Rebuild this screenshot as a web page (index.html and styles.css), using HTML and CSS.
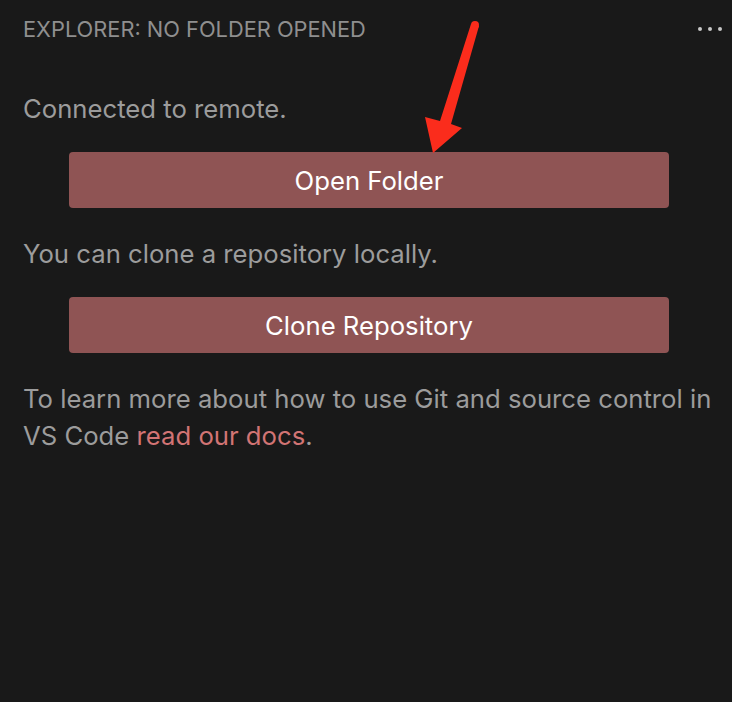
FILE: index.html
```html
<!DOCTYPE html>
<html>
<head>
<meta charset="utf-8">
<link rel="stylesheet" href="styles.css">
</head>
<body>
<div class="pane">
  <div class="header">
    <span class="title">EXPLORER: NO FOLDER OPENED</span>
    <span class="more"><i></i><i></i><i></i></span>
  </div>
  <div class="content">
    <p class="line first">Connected to remote.</p>
    <div class="btnrow"><button class="btn">Open Folder</button></div>
    <p class="line">You can clone a repository locally.</p>
    <div class="btnrow"><button class="btn">Clone Repository</button></div>
    <p class="line para">To learn more about how to use Git and source control in VS Code <a class="link">read our docs</a>.</p>
  </div>
  <svg class="arrow" width="732" height="702" viewBox="0 0 732 702">
    <circle cx="475" cy="25" r="4" fill="#fb2c1c"/>
    <polygon points="471,24 479,26 451,124 462,128 433,153 425,117 440,121" fill="#fb2c1c"/>
  </svg>
</div>
</body>
</html>
```
FILE: styles.css
```css
html, body {
  margin: 0;
  padding: 0;
  background: #191919;
}
.pane {
  position: relative;
  width: 732px;
  height: 702px;
  background: #191919;
  font-family: Inter, "Noto Sans", sans-serif;
  overflow: hidden;
}
.header {
  height: 58px;
  display: flex;
  align-items: center;
  justify-content: space-between;
  padding: 0 10px 0 23px;
}
.title {
  font-size: 21.8px;
  color: #8f8f8f;
}
.more {
  display: flex;
  gap: 6px;
  align-items: center;
}
.more i {
  width: 4px;
  height: 4px;
  border-radius: 50%;
  background: #c8c8c8;
}
.content {
  padding: 0 17px 0 23px;
}
.line {
  margin: 0;
  font-size: 25.7px;
  line-height: 37px;
  color: #9c9c9c;
}
.first {
  margin-top: 32px;
}
.btnrow {
  display: flex;
  justify-content: center;
  margin: 25px 0 27px;
}
.btn {
  width: 600px;
  height: 56px;
  border: none;
  border-radius: 4px;
  background: #8f5454;
  color: #ffffff;
  font-family: Inter, "Noto Sans", sans-serif;
  font-size: 25.7px;
  padding: 0;
}
.para {
  margin-top: 0;
}
.link {
  color: #d27474;
}
.arrow {
  position: absolute;
  left: 0;
  top: 0;
  pointer-events: none;
}
```
